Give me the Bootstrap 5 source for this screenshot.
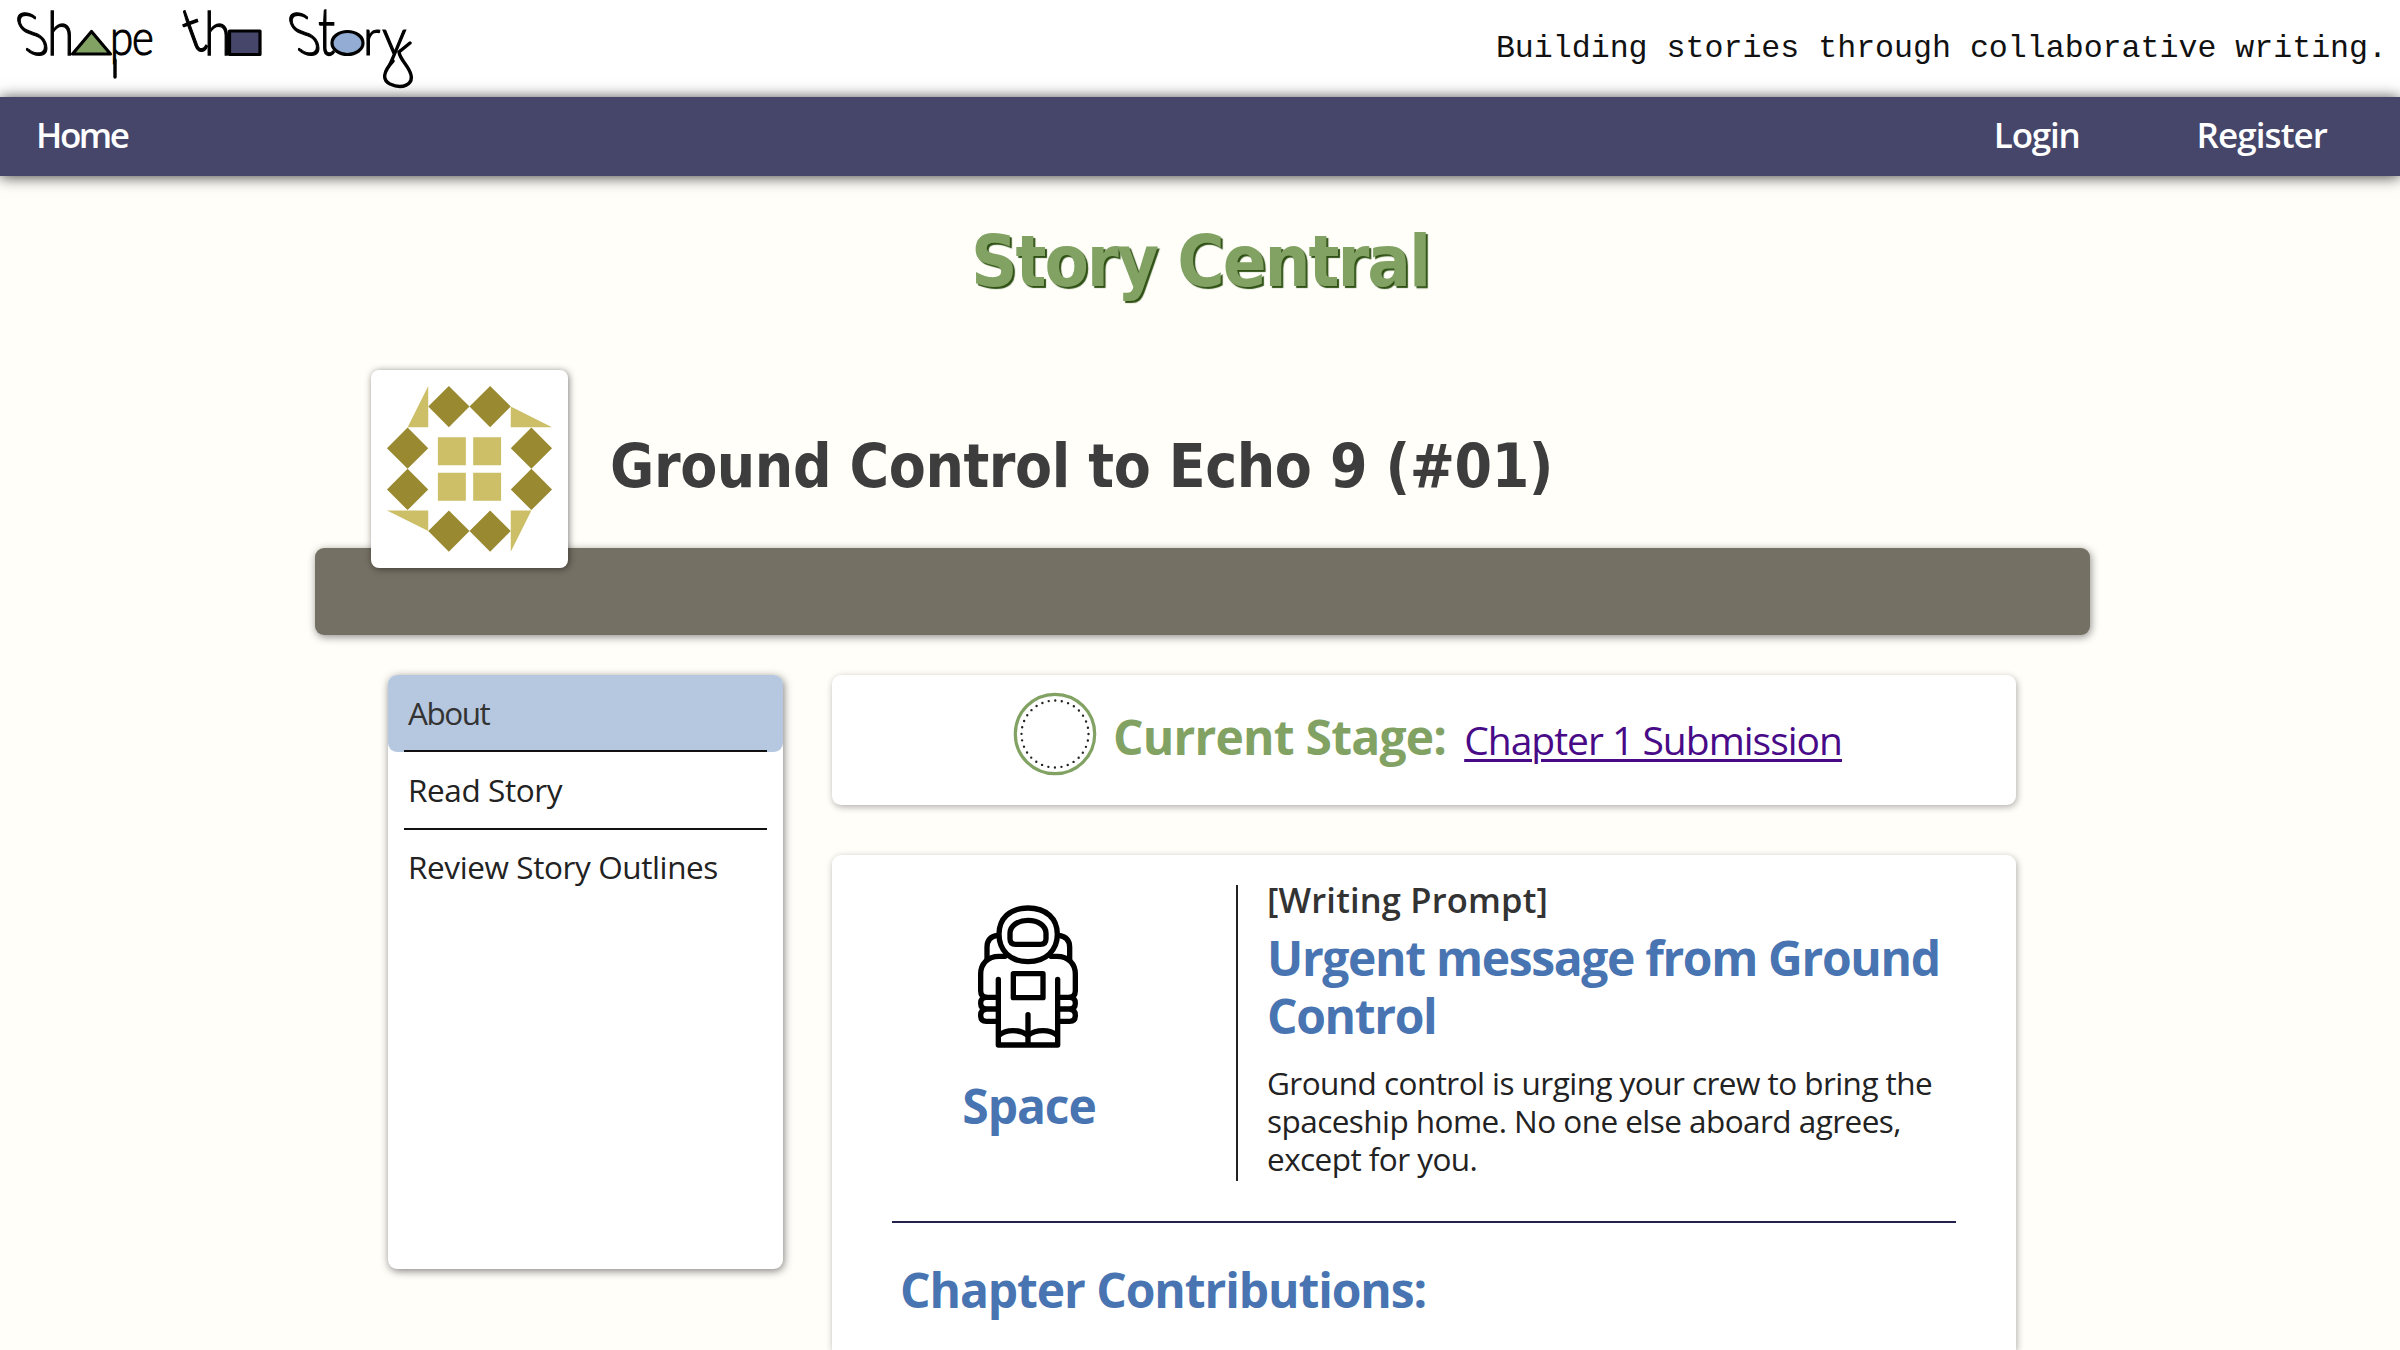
<!DOCTYPE html>
<html lang="en">
<head>
<meta charset="utf-8">
<title>Shape the Story</title>
<link href="https://cdn.jsdelivr.net/npm/bootstrap@5.3.0/dist/css/bootstrap.min.css" rel="stylesheet">
<style>
html, body { height: 1350px; overflow: hidden; }
body { background: #fffef9; font-family: "Open Sans", sans-serif; color: #222; font-size: 31.5px; }
.site-head { height: 97px; background: #fff; }
.tagline { font: 31.6px/40px "Liberation Mono", monospace; color: #111; padding-right: 13px; white-space: nowrap; }
.site-nav { height: 79px; background: #45466a; box-shadow: 0 1px 14px rgba(0,0,0,.75); padding: 0 73px 3px 36px; position: relative; }
.site-nav a { color: #fff; font-size: 35px; font-weight: 600; line-height: 40px; text-decoration: none; white-space: nowrap; letter-spacing: -.93px; }
.site-nav .home { letter-spacing: -2.4px; }
.site-nav .login { letter-spacing: -1.2px; margin-right: 117px; }
.page-title { font: bold 72px/100px "DejaVu Sans Condensed", "DejaVu Sans", sans-serif; color: #81a263; text-shadow: 2px 2px 1px #2f5014; margin: 35px 0 0; letter-spacing: -2.1px; }
.page-wrap { width: 1775px; margin: 59px 0 0 315px; }
.story-head { height: 178px; padding-left: 56px; }
.avatar { width: 197px; height: 198px; background: #fff; border-radius: 8px; box-shadow: 1px 1px 7px rgba(0,0,0,.5); position: relative; flex: none; }
.story-name { font: bold 60px/80px "DejaVu Sans Condensed", "DejaVu Sans", sans-serif; color: #3d3d3d; margin: 56px 0 0 42px; white-space: nowrap; letter-spacing: -.4px; }
.band { height: 87px; background: #757064; border-radius: 9px; box-shadow: 1px 2px 8px rgba(0,0,0,.45); }
.columns { margin-top: 40px; padding-left: 73px; gap: 49px; }
.panel { background: #fff; border-radius: 9px; box-shadow: 1px 2px 7px rgba(0,0,0,.32); }
.side { width: 395px; height: 594px; box-shadow: 1px 2px 8px rgba(0,0,0,.5); }
.side a { display: block; padding: 0 16px; color: #222; text-decoration: none; border-radius: 9px; white-space: nowrap; letter-spacing: -.4px; }
.side a.current { background: #b6c7e0; color: #333; letter-spacing: -1.5px; }
.side a > span { display: flex; align-items: center; height: 77.3px; padding: 0 0 1px 4px; border-bottom: 2px solid #111; }
.side a:last-child > span { border: 0; padding-bottom: 4px; }
.main { width: 1184px; }
.stage { height: 130px; padding-left: 181px; }
.stage svg { margin-top: 17px; flex: none; }
.stage-text { margin: 32px 0 0 16px; line-height: 60px; white-space: nowrap; }
.stage-text b, .blue-h { font-size: 48px; font-weight: 700; letter-spacing: -1.1px; }
.stage-text b { color: #81a263; letter-spacing: -.8px; }
.stage-text a { font-size: 39px; color: #480a87; margin-left: 18px; text-decoration-thickness: 3px; text-underline-offset: 4px; letter-spacing: -1px; }
.blue-h { color: #4874b2; margin: 0; white-space: nowrap; }
.prompt { margin-top: 50px; height: 495px; padding: 30px 60px 0; }
.genre { width: 276px; padding-top: 16px; flex: none; }
.genre svg { margin-left: 82px; }
.genre .blue-h { line-height: 60px; margin: 25px 2px 0 0; }
.prompt-body { margin-left: 68px; border-left: 2px solid #222; height: 296px; padding-left: 29px; flex: none; }
.kicker { font-size: 34.5px; font-weight: 600; line-height: 30px; color: #333; letter-spacing: .17px; }
.prompt-body .blue-h { line-height: 57.7px; margin-top: 14px; letter-spacing: -1.36px; }
.prompt-body p { line-height: 37.7px; margin: 20px 0 0; white-space: nowrap; letter-spacing: -.55px; }
.rule { height: 2px; background: #22224a; margin-top: 40px; }
.prompt .contrib { line-height: 60px; margin: 37px 0 0 8px; }
</style>
<script src="https://cdn.jsdelivr.net/npm/bootstrap@5.3.0/dist/js/bootstrap.bundle.min.js"></script>
</head>
<body>
<header class="site-head d-flex justify-content-between align-items-center">
<svg width="430" height="97" viewBox="0 0 430 97" font-family="Lato" font-weight="300" fill="#000" stroke="#000">
<g font-size="59" stroke-width="1.2">
<text transform="translate(26 54.500) skewX(20) scale(.86 1)">S</text><text transform="translate(47 54.500) scale(.84 1.050)">h</text>
<text transform="translate(192 54.500) rotate(-20) scale(.9 1.1)">t</text><text transform="translate(204 54.500) scale(.84 1.050)">h</text>
<text transform="translate(298 54.500) skewX(20) scale(.86 1)">S</text><text transform="translate(318 54.500) scale(.85 1.150)">t</text>
</g>
<g font-size="49" stroke-width="1.2"><text transform="translate(110 54.500) scale(.86 1)">p</text><text transform="translate(132 54.500) scale(.85 1)">e</text><text x="363" y="54.500">r</text><text transform="translate(382 54.500) scale(1 1)">y</text></g>
<path d="M115 60V77M393 61C383 72 382 80 390 84 403 90 413 84 411 75 409 66 400 60 399 52L410 43" fill="none" stroke-width="3.400" stroke-linecap="round"/>
<g stroke-width="3.2" stroke-linejoin="round"><path d="M91.500 31.500L110.500 54H72.500Z" fill="#81a263"/><path d="M229.500 31H260V54.500H229.500Z" fill="#45466a"/><ellipse cx="347.500" cy="43" rx="15.500" ry="11.500" fill="#92acd3"/></g>
</svg>
<div class="tagline">Building stories through collaborative writing.</div>
</header>
<nav class="site-nav d-flex align-items-center">
<a class="home me-auto" href="#">Home</a><a href="#" class="login">Login</a><a href="#">Register</a>
</nav>
<h1 class="page-title text-center">Story Central</h1>
<div class="page-wrap">
<div class="story-head d-flex align-items-start">
<div class="avatar"><svg width="197" height="198" viewBox="213 60 590 595" class="d-block"><g fill="#998a32"><path d="M446 108l62 62-62 62-62-62z"/><path d="M570 108l62 62-62 62-62-62zM322 233l62 62-62 62-62-62zM322 357l62 62-62 62-62-62zM694 233l62 62-62 62-62-62zM694 357l62 62-62 62-62-62zM446 482l62 62-62 62-62-62zM570 482l62 62-62 62-62-62z"/></g><g fill="#ccbf67"><path d="M384 108V232H322zM632 170L756 232H632zM260 482H384V544zM632 482H694L632 606zM413 262h84v84h-84zM519 262h84v84h-84zM413 369h84v84h-84zM519 369h84v84h-84z"/></g></svg></div>
<h2 class="story-name">Ground Control to Echo 9 (#01)</h2>
</div>
<div class="band"></div>
<div class="columns d-flex align-items-start">
<aside class="side panel"><a class="current" href="#"><span>About</span></a><a href="#"><span>Read Story</span></a><a href="#"><span>Review Story Outlines</span></a></aside>
<main class="main">
<section class="stage panel d-flex align-items-start">
<svg width="84" height="84" viewBox="0 0 84 84" fill="none"><circle cx="42" cy="42" r="39.700" stroke="#81a263" stroke-width="3.200"/><circle cx="42" cy="42" r="33.500" stroke="#222" stroke-width="2.400" stroke-linecap="round" stroke-dasharray="0 6.578"/></svg>
<div class="stage-text"><b>Current Stage:</b><a href="#">Chapter 1 Submission</a></div>
</section>
<section class="prompt panel rounded-bottom-0">
<div class="d-flex">
<div class="genre text-center">
<svg width="108" height="150" viewBox="103 63 324 450" fill="none" stroke="#000" stroke-width="16" stroke-linecap="round" stroke-linejoin="round" class="d-block"><path d="M265 84C210 84 178 116 178 163S210 245 265 245 353 210 353 163 320 84 265 84Z"/><path d="M265 121C235 121 211 137 211 160V176Q211 193 228 193H302Q319 193 319 176V160C319 137 295 121 265 121Z"/><path d="M174 166Q142 170 142 202V238M356 166Q390 170 390 202V238"/><path d="M196 229H178C144 229 123 252 123 282V332Q123 352 143 352H170M334 229H352C386 229 407 252 407 282V332Q407 352 387 352H360"/><path d="M176 298V495H354V298M265 404V490M221 281H310V353H221Z"/><path d="M140 352Q123 352 123 370 123 387 140 387H170M140 387Q123 389 123 406 123 424 140 424H170M390 352Q407 352 407 370 407 387 390 387H360M390 387Q407 389 407 406 407 424 390 424H360"/><path d="M178 466C200 447 240 447 265 466 290 447 330 447 352 466"/></svg>
<h3 class="blue-h">Space</h3>
</div>
<div class="prompt-body">
<div class="kicker">[Writing Prompt]</div>
<h3 class="blue-h">Urgent message from Ground<br>Control</h3>
<p>Ground control is urging your crew to bring the<br>spaceship home. No one else aboard agrees,<br>except for you.</p>
</div>
</div>
<div class="rule"></div>
<h3 class="blue-h contrib">Chapter Contributions:</h3>
</section>
</main>
</div>
</div>
</body>
</html>
